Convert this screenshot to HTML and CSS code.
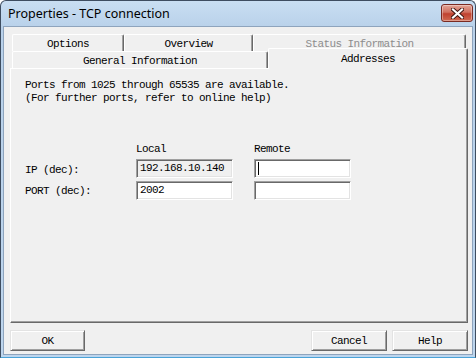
FILE: index.html
```html
<!DOCTYPE html>
<html lang="en">
<head>
    <meta charset="UTF-8">
    <title>Properties - TCP connection</title>
    <link rel="stylesheet" href="styles.css">
</head>
<body>
    <div class="window">
        <header class="titlebar">
            <span class="title">Properties - TCP connection</span>
            <button class="close" aria-label="Close">
                <svg width="13" height="11" viewBox="0 0 13 11">
                    <path d="M2 1.5 L11 9.5 M11 1.5 L2 9.5" stroke="#3b1410" stroke-width="4" stroke-linecap="square"/>
                    <path d="M2 1.5 L11 9.5 M11 1.5 L2 9.5" stroke="#fff" stroke-width="2.2" stroke-linecap="square"/>
                </svg>
            </button>
        </header>

        <div class="client">
            <div class="tabs">
                <div class="tab-row back">
                    <div class="tab w-options">Options</div>
                    <div class="tab w-overview">Overview</div>
                    <div class="tab w-status disabled">Status Information</div>
                </div>
                <div class="tab-row front">
                    <div class="tab w-general">General Information</div>
                    <div class="tab w-addresses selected">Addresses</div>
                </div>
            </div>

            <section class="panel">
                <p class="note">Ports from 1025 through 65535 are available.<br>(For further ports, refer to online help)</p>

                <div class="addr-grid">
                    <span></span>
                    <span class="col-head">Local</span>
                    <span class="col-head">Remote</span>

                    <span class="row-label">IP (dec):</span>
                    <div class="field readonly">192.168.10.140</div>
                    <div class="field"><span class="caret"></span></div>

                    <span class="row-label">PORT (dec):</span>
                    <div class="field">2002</div>
                    <div class="field"></div>
                </div>
            </section>

            <footer class="buttons">
                <button class="btn">OK</button>
                <span class="spacer"></span>
                <button class="btn wide">Cancel</button>
                <button class="btn wide">Help</button>
            </footer>
        </div>
    </div>
</body>
</html>
```

FILE: styles.css
```css
* { box-sizing: border-box; }
body { margin: 0; background: #fff; font-family: "Liberation Mono", monospace; font-size: 11px; letter-spacing: -0.6px; color: #000; }

.window { width: 476px; height: 358px; display: flex; flex-direction: column; border: 1px solid #3e4d60; border-bottom-color: #4aa3d8; border-radius: 6px 6px 0 0; background: linear-gradient(#c9def2, #b9d1ea 26px, #bdd5ed); }
.titlebar { height: 25px; display: flex; justify-content: space-between; align-items: flex-start; padding: 0 2px 0 7px; }
.title { font-family: "Noto Sans", sans-serif; font-size: 12.5px; letter-spacing: 0; line-height: 26px; }
.close { width: 32px; height: 18px; margin-top: 3px; padding: 0; display: flex; align-items: center; justify-content: center; border: 1px solid #7a2a22; border-radius: 3px; background: linear-gradient(#e3a597, #d0705f 45%, #c0412f 55%, #d06a52); box-shadow: inset 0 0 0 1px rgba(255,255,255,0.35); }

.client { flex: 1; margin: 0 2px 2px 2px; padding: 7px 4px 0 6px; background: #f0f0f0; border: 1px solid #8ea4bd; display: flex; flex-direction: column; }

.tabs { margin-left: 2px; }
.tab-row { display: flex; height: 17px; }
.tab-row.front { position: relative; z-index: 2; }
.tab { height: 17px; padding-top: 1px; line-height: 16px; text-align: center; background: #f0f0f0; border-top: 1px solid #fff; border-left: 1px solid #fff; border-right: 1px solid #696969; box-shadow: inset -1px 0 #a0a0a0; border-radius: 2px 2px 0 0; }
.tab.disabled { color: #8d8d8d; }
.tab.selected { height: 21px; margin-bottom: -1px; align-self: flex-end; padding-top: 2px; line-height: 17px; }
.w-options { width: 112px; }
.w-overview { width: 129px; }
.w-status { width: 213px; }
.w-general { width: 256px; }
.w-addresses { width: 200px; }

.panel { height: 255px; padding: 10px 14px; border: 1px solid #fff; border-right-color: #696969; border-bottom-color: #696969; box-shadow: inset -1px -1px #a0a0a0; }
.note { margin: 0; line-height: 13px; }

.addr-grid { margin-top: 37px; display: grid; grid-template-columns: 111px 118px 97px; grid-template-rows: 14px 19px 19px; row-gap: 3px; align-items: center; }
.addr-grid .col-head { align-self: start; line-height: 14px; }
.addr-grid > :nth-child(4) { margin-top: 2px; }
.field { width: 97px; height: 19px; padding: 0 3px; line-height: 17px; background: #fff; border: 1px solid #a0a0a0; border-right-color: #fff; border-bottom-color: #fff; box-shadow: inset 1px 1px #696969, inset -1px -1px #e3e3e3; display: flex; align-items: center; }
.field.readonly { background: #f0f0f0; }
.caret { width: 1px; height: 13px; background: #000; }

.buttons { display: flex; gap: 5px; margin-top: 7px; }
.spacer { flex: 1; }
.btn { width: 75px; height: 21px; padding: 0; font: inherit; letter-spacing: inherit; color: #000; background: #f0f0f0; border: 1px solid #e3e3e3; border-right-color: #696969; border-bottom-color: #696969; box-shadow: inset 1px 1px #fff, inset -1px -1px #a0a0a0; }
.btn.wide { width: 76px; }
```
